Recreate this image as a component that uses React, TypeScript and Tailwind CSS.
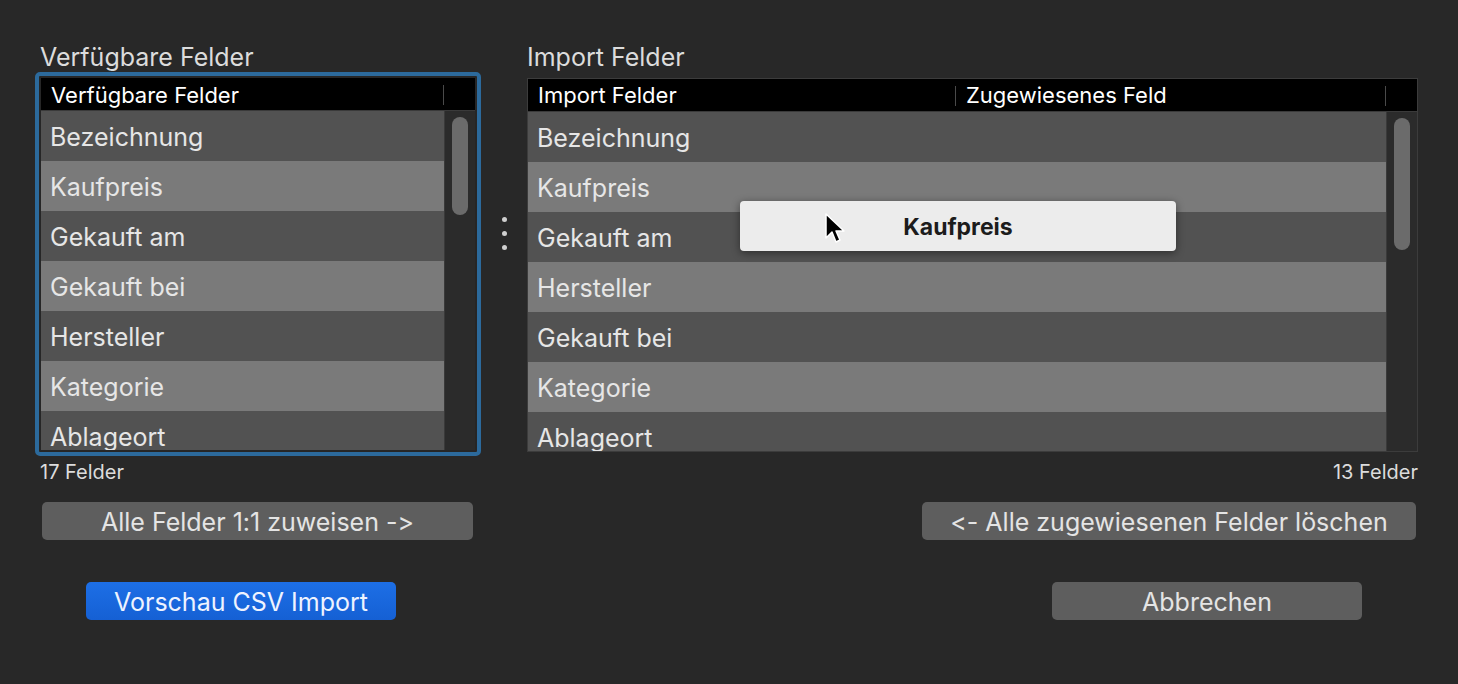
import React from 'react';

const leftRows = ['Bezeichnung', 'Kaufpreis', 'Gekauft am', 'Gekauft bei', 'Hersteller', 'Kategorie', 'Ablageort'];
const rightRows = ['Bezeichnung', 'Kaufpreis', 'Gekauft am', 'Hersteller', 'Gekauft bei', 'Kategorie', 'Ablageort'];

const Row: React.FC<{ label: string; index: number }> = ({ label, index }) => (
  <div
    className={`h-[50px] shrink-0 flex items-center pl-[9px] pt-[4px] text-[25px] text-[#e6e6e6] ${
      index % 2 === 0 ? 'bg-[#525252]' : 'bg-[#7a7a7a]'
    }`}
  >
    {label}
  </div>
);

const Scrollbar: React.FC<{ thumb: string }> = ({ thumb }) => (
  <div className="w-[31px] shrink-0 bg-[#2b2b2b] border-l border-[#3a3a3a] pt-[6px] flex justify-center">
    <div className={`w-[16px] ${thumb} rounded-full bg-[#6b6b6b]`} />
  </div>
);

const Cursor = () => (
  <svg width="24" height="34" viewBox="0 0 24 34" className="absolute left-[84px] top-[11px]">
    <path d="M2 2 L2 26 L8 20 L12 30 L16 28 L12 19 L20 19 Z" fill="#000" stroke="#fff" strokeWidth="1.5" strokeLinejoin="round" />
  </svg>
);

export default function App() {
  return (
    <div className="w-full h-[684px] bg-[#282828] overflow-hidden pt-[42px] pl-[35px] font-['Inter','Noto_Sans',sans-serif] [font-feature-settings:'calt'_0]">
      <div className="flex">
        {/* Left column */}
        <div className="w-[446px] shrink-0 flex flex-col">
          <div className="h-[30px] pl-[5px] text-[25px] leading-[30px] text-[#dcdcdc]">Verfügbare Felder</div>
          <div className="h-[384px] border-[4px] border-[#2c6a9c] rounded-[5px] bg-[#262626] p-[2px]">
            <div className="h-full flex flex-col overflow-hidden">
              <div className="h-[33px] shrink-0 bg-black flex items-center pt-[2px] border-b border-[#3a3a3a]">
                <div className="flex-1 pl-[10px] text-[22px] text-white">Verfügbare Felder</div>
                <div className="w-px h-[20px] bg-[#4a4a4a] mr-[31px]" />
              </div>
              <div className="flex flex-1 overflow-hidden">
                <div className="flex-1 flex flex-col overflow-hidden">
                  {leftRows.map((r, i) => (
                    <Row key={r} label={r} index={i} />
                  ))}
                </div>
                <Scrollbar thumb="h-[98px]" />
              </div>
            </div>
          </div>
          <div className="pl-[5px] h-[26px] text-[20px] leading-[32px] text-[#dcdcdc]">17 Felder</div>
          <div className="pl-[7px] mt-[20px]">
            <button className="w-[431px] h-[38px] rounded-[5px] bg-[#5e5e5e] pt-[3px] text-[25px] text-[#e4e4e4] flex items-center justify-center">
              Alle Felder 1:1 zuweisen -&gt;
            </button>
          </div>
          <div className="pl-[51px] mt-[42px]">
            <button className="w-[310px] h-[38px] rounded-[5px] bg-gradient-to-b from-[#1d6fe6] to-[#1560d4] pt-[3px] text-[25px] text-[#eef3ff] flex items-center justify-center">
              Vorschau CSV Import
            </button>
          </div>
        </div>

        {/* Middle dots */}
        <div className="w-[46px] shrink-0 flex flex-col items-center pt-[175px] gap-[9px]">
          <div className="w-[5px] h-[5px] rounded-full bg-[#cfcfcf]" />
          <div className="w-[5px] h-[5px] rounded-full bg-[#cfcfcf]" />
          <div className="w-[5px] h-[5px] rounded-full bg-[#cfcfcf]" />
        </div>

        {/* Right column */}
        <div className="w-[891px] shrink-0 flex flex-col">
          <div className="h-[30px] text-[25px] leading-[30px] text-[#dcdcdc]">Import Felder</div>
          <div className="mt-[6px] h-[374px] border border-[#3c3c3c] bg-[#262626] flex flex-col overflow-hidden relative">
            <div className="h-[33px] shrink-0 bg-black flex items-center pt-[1px] border-b border-[#3a3a3a]">
              <div className="w-[427px] pl-[10px] text-[22px] text-white">Import Felder</div>
              <div className="w-px h-[20px] bg-[#4a4a4a]" />
              <div className="flex-1 pl-[10px] text-[22px] text-white">Zugewiesenes Feld</div>
              <div className="w-px h-[20px] bg-[#4a4a4a] mr-[31px]" />
            </div>
            <div className="flex flex-1 overflow-hidden">
              <div className="flex-1 flex flex-col overflow-hidden">
                {rightRows.map((r, i) => (
                  <Row key={r} label={r} index={i} />
                ))}
              </div>
              <Scrollbar thumb="h-[132px]" />
            </div>
            {/* Drag popup */}
            <div className="absolute left-[212px] top-[122px] w-[436px] h-[50px] rounded-[4px] bg-[#ececec] shadow-[0_2px_8px_rgba(0,0,0,0.45)] pt-[3px] flex items-center justify-center">
              <span className="text-[23px] font-bold text-[#1c1c1c]">Kaufpreis</span>
              <Cursor />
            </div>
          </div>
          <div className="h-[26px] text-[20px] leading-[40px] text-[#dcdcdc] text-right">13 Felder</div>
          <div className="mt-[24px] flex justify-end pr-[2px]">
            <button className="w-[494px] h-[38px] rounded-[5px] bg-[#5e5e5e] pt-[3px] text-[25px] text-[#e4e4e4] flex items-center justify-center">
              &lt;- Alle zugewiesenen Felder löschen
            </button>
          </div>
          <div className="mt-[42px] flex justify-end pr-[56px]">
            <button className="w-[310px] h-[38px] rounded-[5px] bg-[#5e5e5e] pt-[3px] text-[25px] text-[#e4e4e4] flex items-center justify-center">
              Abbrechen
            </button>
          </div>
        </div>
      </div>
    </div>
  );
}
